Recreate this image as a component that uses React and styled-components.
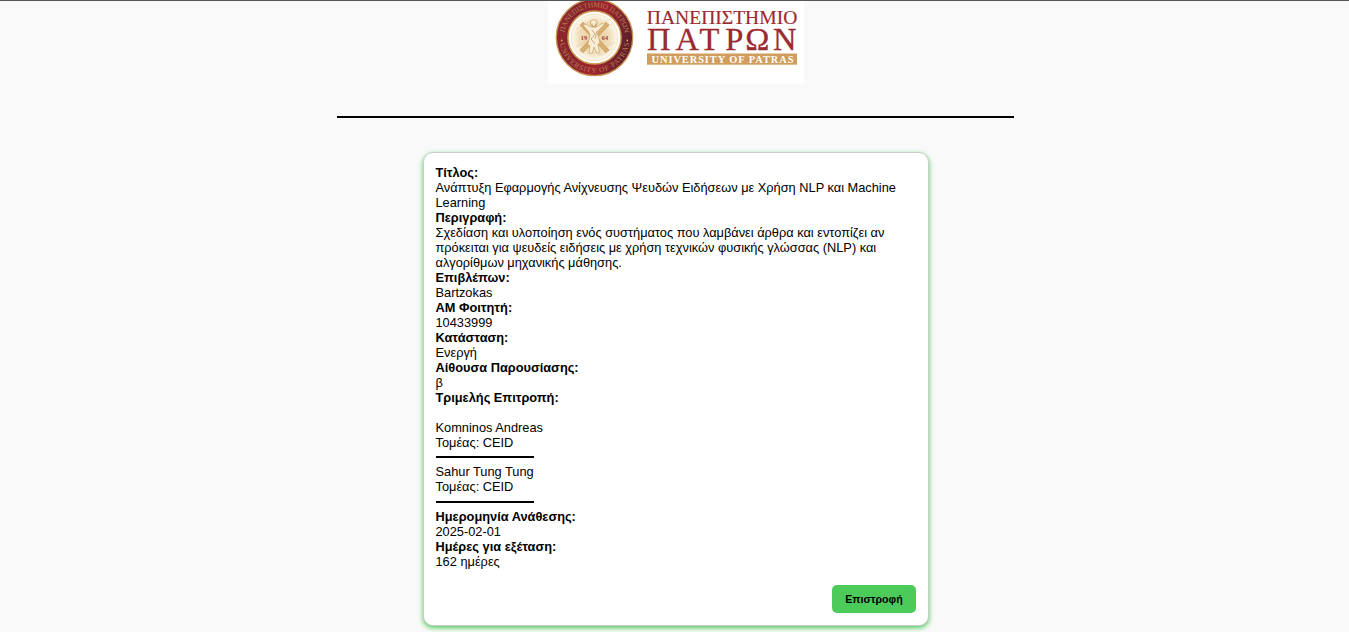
import React from "react";
import styled, { createGlobalStyle } from "styled-components";

const GlobalStyle = createGlobalStyle`
  * { box-sizing: border-box; }
  body {
    margin: 0;
    background: #f9f9f9;
    color: #000;
    font: 12.8px/15px "Liberation Sans", Arial, sans-serif;
    overflow: hidden;
  }
`;

const Page = styled.div`
  height: 632px;
  display: flex;
  flex-direction: column;
  align-items: center;
  border-top: 1px solid #55555a;
  padding-left: 2px;
`;

const Banner = styled.header`
  width: 256px;
  height: 83px;
  background: #fff;
  svg { display: block; }
`;

const Divider = styled.hr`
  width: 677px;
  height: 2px;
  margin: 32px 0 34px;
  border: 0;
  background: #000;
`;

const Card = styled.main`
  width: 506px;
  height: 474px;
  padding: 12px;
  display: flex;
  flex-direction: column;
  background: #fff;
  border: 1px solid #ccc;
  border-radius: 10px;
  box-shadow: 0 2px 5px #4dcb5a;
`;

const Details = styled.dl`
  margin: 0;
`;

const Label = styled.dt`
  font-weight: bold;
`;

const Value = styled.dd`
  margin: 0;
`;

const Committee = styled.dd`
  width: 98px;
  margin: 15px 0 0;
  white-space: nowrap;
`;

const Member = styled.div`
  height: ${(p) => p.$height}px;
  display: flex;
  flex-direction: column;
`;

const MemberRule = styled.hr`
  width: 98px;
  height: 2px;
  margin: ${(p) => p.$gap}px 0 0;
  border: 0;
  background: #000;
`;

const BackButton = styled.button`
  align-self: flex-end;
  margin-top: auto;
  width: 84px;
  height: 28px;
  padding: 0 0 0 1px;
  border: 0;
  border-radius: 5px;
  background: #4dcb5a;
  color: #000;
  font: bold 10.67px "Liberation Sans", Arial, sans-serif;
`;

const SERIF = '"Liberation Serif", "Times New Roman", serif';

function UniversityLogo() {
  return (
    <svg width="256" height="83" viewBox="548 1 256 83" role="img">
      <defs>
        <linearGradient id="maroon" x1="0" y1="0" x2="1" y2="0.2">
          <stop offset="0" stopColor="#97272d" />
          <stop offset="0.3" stopColor="#85242c" />
          <stop offset="0.65" stopColor="#a3252d" />
          <stop offset="1" stopColor="#62202a" />
        </linearGradient>
        <radialGradient id="parchment">
          <stop offset="0" stopColor="#e6c998" />
          <stop offset="0.65" stopColor="#f0deba" />
          <stop offset="1" stopColor="#fdf9f0" />
        </radialGradient>
        <path id="upperArc" d="M564.1 37.5a30.4 30.4 0 0 1 60.8 0" />
        <path id="lowerArc" d="M559.3 37.5a35.2 35.2 0 0 0 70.4 0" />
      </defs>
      <circle cx="594.5" cy="37.5" r="38.2" fill="url(#maroon)" stroke="#c49150" strokeWidth="1.3" />
      <circle cx="594.5" cy="37.5" r="26.6" fill="#fffdf8" stroke="#c99b58" strokeWidth="1.5" />
      <circle cx="594.5" cy="37.5" r="23.3" fill="url(#parchment)" stroke="#ead3a8" strokeWidth="0.6" />
      <g fill="#b57e56" fontFamily={SERIF} fontSize="7.4">
        <text><textPath href="#upperArc" startOffset="5" textLength="86">ΠΑΝΕΠΙΣΤΗΜΙΟ ΠΑΤΡΩΝ</textPath></text>
        <text><textPath href="#lowerArc" startOffset="6" textLength="99">UNIVERSITY OF PATRAS</textPath></text>
      </g>
      <circle cx="561.7" cy="40.5" r="0.9" fill="#d5a066" />
      <circle cx="627.3" cy="40.5" r="0.9" fill="#d5a066" />
      <g stroke="#e1c18a" strokeWidth="0.5" opacity="0.8">
        <path d="M576 29l15-8M577 33l13-7M576 47l14-7M579 52l13-8M600 24l13-6M602 29l12-6M602 48l13-6M598 56l14-7" />
      </g>
      <path d="M581.5 23.5L607.5 51.5M607.5 23.5L581.5 51.5" stroke="#c59555" strokeWidth="4.6" />
      <path d="M581.5 23.5L607.5 51.5M607.5 23.5L581.5 51.5" stroke="#d9b072" strokeWidth="3.4" />
      <circle cx="593.7" cy="23" r="3.4" fill="#f8edcf" stroke="#c49350" strokeWidth="0.7" />
      <path d="M590.6 27l-5-3-2.2 1.4 5.2 6 1.4 4.1-2.3 9 2.1 1.2-.6 7.6h3.1l1.7-6.2 2.8 6.2 2.8-.6-1.8-8.3 2.1-1.4-2.3-9 .5-3.1 6.2-6.5-2.3-1-5.4 3.8z" fill="#f8edd5" stroke="#c89b60" strokeWidth="0.6" />
      <path d="M592 30l3 4-4 5 4 5M597 31l-2 8M592 23.5v2.3l2 1.2 1.7-1.2v-2.3" fill="none" stroke="#a97a42" strokeWidth="0.6" />
      <g fill="#aa3439" fontFamily={SERIF} fontSize="6.2" fontWeight="bold">
        <text x="580.8" y="40">19</text>
        <text x="601.8" y="40">64</text>
      </g>
      <g fill="#9b2930" stroke="#9b2930" fontFamily={SERIF}>
        <text x="646.8" y="23.6" fontSize="18" textLength="150.5" lengthAdjust="spacingAndGlyphs" strokeWidth="0.15">ΠΑΝΕΠΙΣΤΗΜΙΟ</text>
        <text x="647 675.5 699.5 725.3 745.2 772.9" y="50" fontSize="32.5" strokeWidth="0.3">ΠΑΤΡΩΝ</text>
      </g>
      <rect x="647" y="53.5" width="150" height="11.2" fill="#d19d5c" />
      <text x="651.5" y="62.7" fill="#fff" fontFamily={SERIF} fontSize="10.4" fontWeight="bold" textLength="142">UNIVERSITY OF PATRAS</text>
    </svg>
  );
}

export default function App() {
  return (
    <>
      <GlobalStyle />
      <Page>
        <Banner><UniversityLogo /></Banner>
        <Divider />
        <Card>
          <Details>
            <Label>Τίτλος:</Label>
            <Value>Ανάπτυξη Εφαρμογής Ανίχνευσης Ψευδών Ειδήσεων με Χρήση NLP και Machine Learning</Value>
            <Label>Περιγραφή:</Label>
            <Value>Σχεδίαση και υλοποίηση ενός συστήματος που λαμβάνει άρθρα και εντοπίζει αν πρόκειται για ψευδείς ειδήσεις με χρήση τεχνικών φυσικής γλώσσας (NLP) και αλγορίθμων μηχανικής μάθησης.</Value>
            <Label>Επιβλέπων:</Label>
            <Value>Bartzokas</Value>
            <Label>ΑΜ Φοιτητή:</Label>
            <Value>10433999</Value>
            <Label>Κατάσταση:</Label>
            <Value>Ενεργή</Value>
            <Label>Αίθουσα Παρουσίασης:</Label>
            <Value>β</Value>
            <Label>Τριμελής Επιτροπή:</Label>
            <Committee>
              <Member $height={44}>
                <span>Komninos Andreas</span>
                <span>Τομέας: CEID</span>
                <MemberRule $gap={6} />
              </Member>
              <Member $height={45}>
                <span>Sahur Tung Tung</span>
                <span>Τομέας: CEID</span>
                <MemberRule $gap={7} />
              </Member>
            </Committee>
            <Label>Ημερομηνία Ανάθεσης:</Label>
            <Value>2025-02-01</Value>
            <Label>Ημέρες για εξέταση:</Label>
            <Value>162 ημέρες</Value>
          </Details>
          <BackButton type="button">Επιστροφή</BackButton>
        </Card>
      </Page>
    </>
  );
}
